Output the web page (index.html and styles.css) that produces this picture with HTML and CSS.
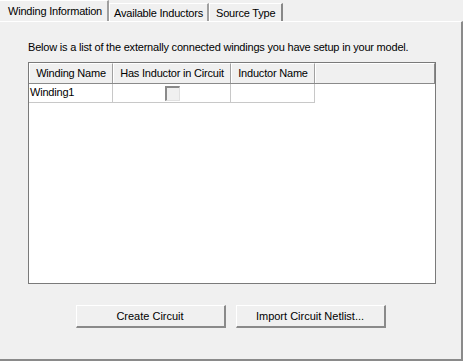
FILE: index.html
```html
<!DOCTYPE html>
<html lang="en">
<head>
  <meta charset="UTF-8">
  <title>Winding Information</title>
  <link rel="stylesheet" href="styles.css">
</head>
<body>
  <div class="dialog">
    <div class="tabs">
      <div class="tab active">Winding Information</div>
      <div class="tab">Available Inductors</div>
      <div class="tab">Source Type</div>
    </div>
    <div class="panel">
      <p class="intro">Below is a list of the externally connected windings you have setup in your model.</p>
      <div class="listview">
        <div class="lv-header">
          <div class="hcell c1">Winding Name</div>
          <div class="hcell c2">Has Inductor in Circuit</div>
          <div class="hcell c3">Inductor Name</div>
          <div class="hcell c4"></div>
        </div>
        <div class="lv-row">
          <div class="cell c1">Winding1</div>
          <div class="cell c2"><span class="checkbox"></span></div>
          <div class="cell c3"></div>
        </div>
      </div>
      <div class="buttons">
        <button type="button" class="btn">Create Circuit</button>
        <button type="button" class="btn">Import Circuit Netlist...</button>
      </div>
    </div>
  </div>
</body>
</html>
```

FILE: styles.css
```css
html, body { margin: 0; padding: 0; }
body { background: #f0f0f0; font-family: "Liberation Sans", Arial, sans-serif; font-size: 11px; letter-spacing: -0.2px; color: #000; }
.dialog { width: 463px; height: 361px; display: flex; flex-direction: column; }

.tabs { display: flex; height: 21px; align-items: flex-end; }
.tab { height: 18px; line-height: 18px; padding: 0 6px 0 7px; border-left: 1px solid #fff; border-top: 1px solid #fff; border-right: 2px solid #a0a0a0; box-sizing: border-box; white-space: nowrap; }
.tab.active { height: 21px; line-height: 20px; padding: 0 6px 0 8px; border-left: none; border-right: 2px solid #a0a0a0; width: 109px; }
.tab:nth-child(2) { width: 100px; padding-left: 4px; }
.tab:nth-child(3) { width: 74px; padding-left: 6px; border-right-color: #888; }

.panel { flex: 1; border-top: 1px solid #fff; border-right: 2px solid #8a8a8a; border-bottom: 2px solid #8a8a8a; padding: 0 25px 0 28px; display: flex; flex-direction: column; }
.intro { margin: 19px 0 8px 0; line-height: 13px; white-space: nowrap; }

.listview { width: 408px; height: 222px; box-sizing: border-box; border: 1px solid #7a7a7a; background: #fff; }
.lv-header { display: flex; height: 21px; background: #f0f0f0; border-bottom: 1px solid #8a8a8a; box-sizing: border-box; }
.hcell { box-sizing: border-box; height: 20px; line-height: 19px; text-align: center; border-top: 1px solid #fff; border-left: 1px solid #fff; border-right: 1px solid #a0a0a0; white-space: nowrap; }
.c1 { width: 84px; }
.c2 { width: 118px; }
.c3 { width: 84px; }
.hcell.c4 { width: 120px; border-right-color: #8a8a8a; }

.lv-row { display: flex; height: 19px; }
.cell { box-sizing: border-box; height: 19px; line-height: 17px; border-right: 1px solid #c8c8c8; border-bottom: 1px solid #c8c8c8; padding-left: 1px; white-space: nowrap; }
.cell.c2 { display: flex; justify-content: center; align-items: center; }
.checkbox { width: 15px; height: 15px; box-sizing: border-box; background: #f0f0f0; border-top: 2px solid #8a8a8a; border-left: 2px solid #8a8a8a; border-bottom: 1px solid #e0e0e0; border-right: 1px solid #e0e0e0; }

.buttons { display: flex; justify-content: center; gap: 10px; margin: 21px 0 0 -3px; }
.btn { width: 150px; height: 23px; font: inherit; color: #000; background: #f0f0f0; border-top: 1px solid #fff; border-left: 1px solid #fff; border-right: 2px solid #8a8a8a; border-bottom: 2px solid #8a8a8a; padding: 0; }
```
